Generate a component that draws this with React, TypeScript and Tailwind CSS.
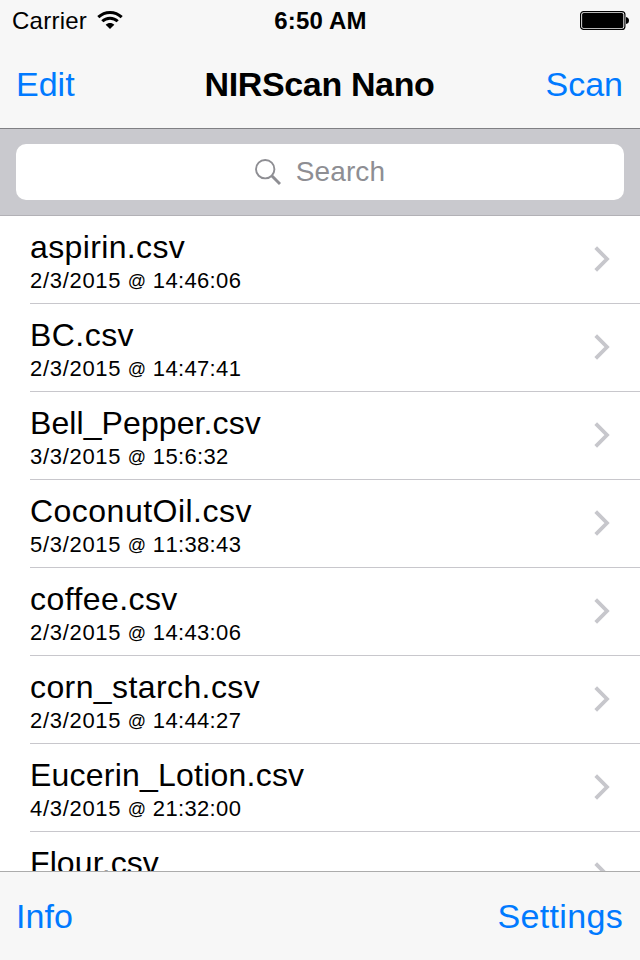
type Scan = { name: string; day: string; time: string; tracking: string };

const scans: Scan[] = [
  { name: "aspirin.csv", day: "2/3/2015", time: "14:46:06", tracking: "tracking-[0.36px]" },
  { name: "BC.csv", day: "2/3/2015", time: "14:47:41", tracking: "tracking-[0.45px]" },
  { name: "Bell_Pepper.csv", day: "3/3/2015", time: "15:6:32", tracking: "tracking-[0.09px]" },
  { name: "CoconutOil.csv", day: "5/3/2015", time: "11:38:43", tracking: "tracking-[0.48px]" },
  { name: "coffee.csv", day: "2/3/2015", time: "14:43:06", tracking: "tracking-[0.43px]" },
  { name: "corn_starch.csv", day: "2/3/2015", time: "14:44:27", tracking: "tracking-[0.4px]" },
  { name: "Eucerin_Lotion.csv", day: "4/3/2015", time: "21:32:00", tracking: "tracking-[0.22px]" },
];

function Chevron() {
  return (
    <svg className="mt-[18px]" width="16" height="26" viewBox="0 0 16 26" fill="none" stroke="#c7c7cc" strokeWidth="3.8">
      <path d="M1.700 1.700L13 13L1.700 24.300" />
    </svg>
  );
}

export default function App() {
  return (
    <div className="flex h-[960px] w-[640px] flex-col overflow-hidden bg-white font-['Liberation_Sans',Arial,sans-serif] text-black">
      <header className="h-[129px] shrink-0 border-b border-[#808084] bg-[#f7f7f7]">
        <div className="grid h-10 grid-cols-3 items-center pl-3 pr-[11px]">
          <div className="flex items-center gap-2.5 text-[24px]">
            <span className="pt-0.5 tracking-[0.25px]">Carrier</span>
            <svg width="26" height="20" viewBox="0 0 26 20" fill="none" stroke="#000" strokeWidth="3">
              <path d="M1.300 7.200C8 .9 18 .9 24.700 7.200M5.300 11.300C9.500 7.200 16.500 7.200 20.700 11.300" />
              <path d="M13 19L8.700 14.700C11 12.400 15 12.400 17.300 14.700Z" fill="#000" stroke="none" />
            </svg>
          </div>
          <div className="pt-0.5 text-center text-[24px] font-bold tracking-[0.2px]">6:50 AM</div>
          <svg className="justify-self-end" width="49" height="20" viewBox="0 0 49 20">
            <rect x=".6" y="1.600" width="44.300" height="17.800" rx="3" fill="none" stroke="#000" strokeWidth="1.200" />
            <rect x="2.100" y="3" width="41.200" height="15" rx="1.500" />
            <path d="M46 7Q49 7.500 49 10.500T46 14Z" />
          </svg>
        </div>
        <div className="grid h-[88px] grid-cols-[1fr_auto_1fr] items-center pl-4 pr-[17px] text-[34px] text-[#007aff]">
          <span>Edit</span>
          <h1 className="font-bold tracking-[-0.35px] text-black">NIRScan Nano</h1>
          <span className="text-right">Scan</span>
        </div>
      </header>
      <div className="h-[87px] shrink-0 border-b border-[#b2b1b6] bg-[#c9c9ce] px-4 pt-[15px]">
        <div className="flex h-14 items-center justify-center gap-[15px] rounded-[10px] bg-white text-[28px] text-[#8e8e93]">
          <svg width="26" height="27" viewBox="0 0 26 27" fill="none" stroke="currentColor" strokeWidth="1.900">
            <circle cx="10.200" cy="10.200" r="9.200" />
            <path d="M17 17L25 25" strokeWidth="3" />
          </svg>
          <span className="tracking-[0.1px]">Search</span>
        </div>
      </div>
      <main className="h-[655px] shrink-0 overflow-hidden">
        {scans.map((scan) => (
          <div key={scan.name} className="ml-[30px] flex h-[88px] justify-between border-b border-[#c8c7cc] pr-[30px] pt-3">
            <div>
              <div className={`h-[38px] text-[32px] leading-[38px] ${scan.tracking}`}>{scan.name}</div>
              <div className="h-7 whitespace-pre text-[22px] leading-[30px] tracking-[0.35px] [font-kerning:none]">
                <span className="tracking-[0.7px]">{scan.day}</span> <span className="align-[1px] text-[18px] leading-none">@</span> {scan.time}
              </div>
            </div>
            <Chevron />
          </div>
        ))}
        <div className="ml-[30px] flex h-[39px] justify-between overflow-hidden pr-[30px] pt-3">
          <div className="h-[38px] text-[32px] leading-[38px] tracking-[0.1px]">Flour.csv</div>
          <Chevron />
        </div>
      </main>
      <footer className="flex h-[89px] shrink-0 items-center justify-between border-t border-[#acacac] bg-[#f7f7f7] pl-4 pr-[17px] text-[34px] text-[#007aff]">
        <span className="tracking-[0.1px]">Info</span>
        <span className="tracking-[0.33px]">Settings</span>
      </footer>
    </div>
  );
}
